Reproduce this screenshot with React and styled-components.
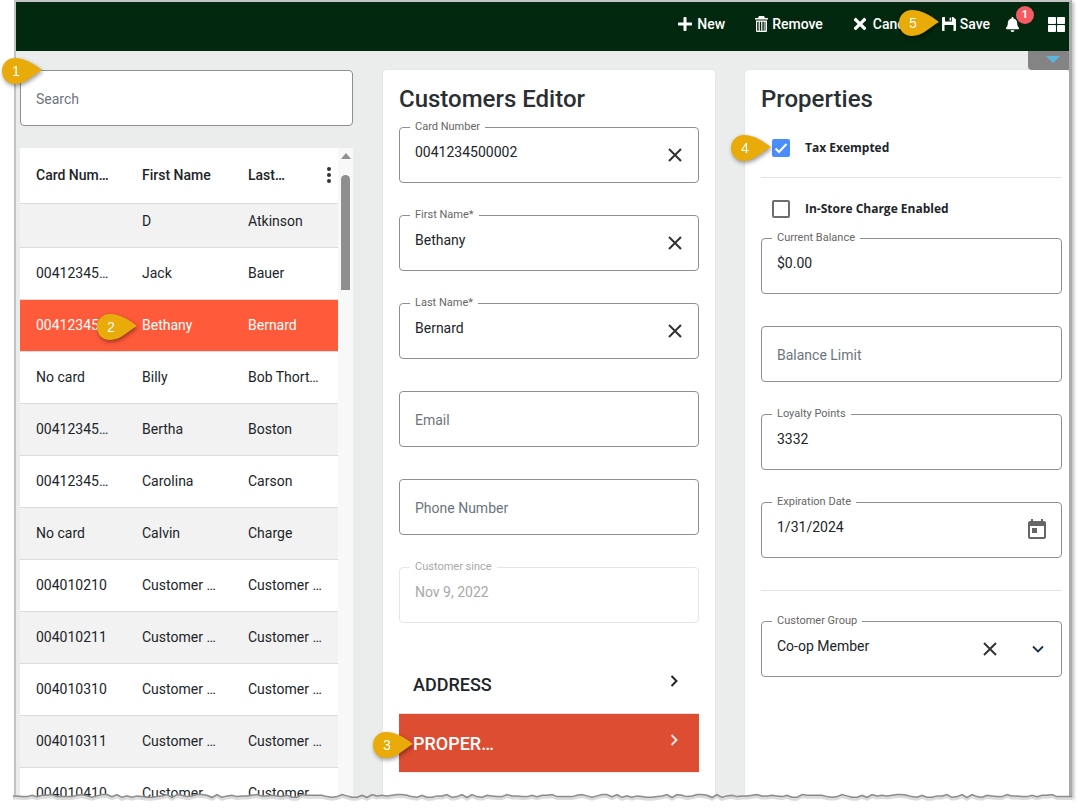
import styled, { createGlobalStyle } from "styled-components";
import { FaPlus, FaTimes, FaBell, FaThLarge } from "react-icons/fa";
import { MdToday } from "react-icons/md";

const GlobalStyle = createGlobalStyle`
  html, body {
    margin: 0;
    background: #fff;
  }
  * {
    box-sizing: border-box;
  }
`;

const Page = styled.div`
  position: relative;
  width: 1081px;
  height: 808px;
  overflow: hidden;
  padding-left: 14px;
  font-family: Roboto, "Liberation Sans", sans-serif;
  color: #212529;
`;

const Frame = styled.div`
  position: relative;
  width: 1058px;
  height: 798px;
  border: 2px solid #c4c4c4;
  border-bottom: 0;
  border-right-width: 3px;
  border-right-color: #aaa;
  background: #ebeded;
  overflow: hidden;
  box-shadow: 2px 2px 3px rgba(0, 0, 0, 0.25);
`;

const Toolbar = styled.header`
  display: flex;
  align-items: center;
  justify-content: flex-end;
  height: 49px;
  padding: 0 4px 5px 0;
  background: #02280f;
  color: #fff;
`;

const ToolButton = styled.div`
  display: flex;
  align-items: center;
  gap: 4px;
  margin-left: ${(p) => p.$ml || 30}px;
  font-size: 14px;
  font-weight: 500;
  svg {
    font-size: ${(p) => p.$icon || 16}px;
  }
`;

const BellWrap = styled.div`
  position: relative;
  display: flex;
  margin-left: 15px;
  font-size: 15px;
`;

const Badge = styled.span`
  position: absolute;
  top: -11px;
  left: 11px;
  width: 18px;
  height: 18px;
  border-radius: 50%;
  background: #f45b63;
  font-size: 11px;
  font-weight: 700;
  line-height: 18px;
  text-align: center;
`;

const GridButton = styled.div`
  display: flex;
  margin-left: 28px;
  font-size: 17px;
`;

const PanelTab = styled.div`
  position: absolute;
  top: 49px;
  right: 0;
  width: 41px;
  height: 19px;
  border-bottom-left-radius: 4px;
  background: #848484;
  &::after {
    content: "";
    position: absolute;
    top: 5px;
    left: 18px;
    border: 7px solid transparent;
    border-top: 7px solid #5ab6de;
    border-bottom: 0;
  }
`;

const Columns = styled.main`
  display: grid;
  grid-template-columns: 333px 332px 1fr;
  gap: 30px;
  padding: 19px 0 0 4px;
  height: 747px;
`;

const ListColumn = styled.section`
  display: flex;
  flex-direction: column;
  gap: 22px;
  min-height: 0;
`;

const SearchBox = styled.div`
  display: flex;
  align-items: center;
  flex: none;
  height: 56px;
  padding: 2px 15px 0;
  border: 1px solid #8f8f8f;
  border-radius: 4px;
  background: #fff;
  color: #6c757d;
  font-size: 14px;
`;

const TableWrap = styled.div`
  display: flex;
  flex: 1;
  min-height: 0;
  overflow: hidden;
`;

const Table = styled.div`
  width: 318px;
  flex: none;
  background: #fff;
`;

const HeaderRow = styled.div`
  position: relative;
  display: grid;
  grid-template-columns: 106px 106px 106px;
  align-items: center;
  height: 56px;
  padding-bottom: 2px;
  border-bottom: 1px solid #dcdcdc;
  font-weight: 500;
`;

const Row = styled.div`
  display: grid;
  grid-template-columns: 106px 106px 106px;
  align-items: center;
  height: ${(p) => (p.$short ? "44px" : "52px")};
  padding-bottom: ${(p) => (p.$short ? "10px" : "2px")};
  border-bottom: 1px solid #dcdcdc;
  background: ${(p) => (p.$selected ? "#ff5a3a" : p.$shaded ? "#f2f2f2" : "#fff")};
  color: ${(p) => (p.$selected ? "#fff" : "inherit")};
`;

const Cell = styled.div`
  padding: 0 16px;
  font-size: 14px;
  white-space: nowrap;
  overflow: hidden;
  text-overflow: ellipsis;
`;

const LastHeadCell = styled(Cell)`
  padding-right: 52px;
`;

const ColumnMenu = styled.div`
  position: absolute;
  top: 19px;
  right: 7px;
  display: flex;
  flex-direction: column;
  gap: 2px;
  span {
    width: 4px;
    height: 4px;
    border-radius: 50%;
    background: #333;
  }
`;

const ScrollBar = styled.div`
  flex: 1;
  display: flex;
  flex-direction: column;
  align-items: center;
  background: #f8f8f8;
  padding-top: 5px;
`;

const ScrollArrow = styled.div`
  border: 5px solid transparent;
  border-bottom: 6px solid #8f8f8f;
  border-top: 0;
`;

const ScrollThumb = styled.div`
  width: 9px;
  height: 115px;
  margin-top: 16px;
  border-radius: 5px 5px 0 0;
  background: #8f8f8f;
`;

const Card = styled.section`
  border-radius: 4px 4px 0 0;
  background: #fff;
  padding: 0 ${(p) => p.$right || 16}px 0 16px;
  box-shadow: 0 0 2px rgba(0, 0, 0, 0.08);
`;

const Title = styled.h2`
  margin: 0;
  height: 57px;
  font-size: 24px;
  font-weight: 500;
  line-height: 58px;
  color: #2b2f33;
`;

const FieldStack = styled.div`
  display: flex;
  flex-direction: column;
  gap: 32px;
`;

const Field = styled.div`
  position: relative;
  display: flex;
  align-items: center;
  height: 56px;
  padding: 0 15px;
  border: 1px solid ${(p) => (p.$disabled ? "#e6e6e6" : "#8f8f8f")};
  border-radius: 4px;
  font-size: 14px;
  color: ${(p) => (p.$disabled ? "#a8a8a8" : "#212529")};
`;

const FieldLabel = styled.label`
  position: absolute;
  top: -8px;
  left: 10px;
  padding: 0 5px;
  background: #fff;
  font-size: 11px;
  line-height: 13px;
  color: ${(p) => (p.$disabled ? "#a8a8a8" : "#666")};
`;

const Value = styled.span`
  flex: 1;
  margin-bottom: 6px;
`;

const Placeholder = styled.span`
  flex: 1;
  padding-top: 2px;
  color: #6c757d;
`;

const IconSlot = styled.span`
  display: flex;
  margin-right: ${(p) => p.$mr || 0}px;
  color: ${(p) => p.$color || "#333"};
`;

const ChevronSlot = styled.span`
  display: flex;
  margin: 0 1px 0 33px;
`;

const Divider = styled.hr`
  margin: ${(p) => p.$top}px 0 0;
  border: 0;
  border-top: 1px solid #e2e2e2;
`;

const CheckRow = styled.div`
  display: flex;
  align-items: center;
  gap: 15px;
  margin-top: ${(p) => p.$top}px;
  padding-left: 11px;
  font-family: "Open Sans", "Liberation Sans", sans-serif;
  font-size: 12px;
  font-weight: 700;
  line-height: 18px;
`;

const CheckBox = styled.span`
  display: flex;
  align-items: center;
  justify-content: center;
  width: 18px;
  height: 18px;
  border-radius: 2px;
  border: 2px solid ${(p) => (p.$checked ? "#4a8dff" : "#6e6e6e")};
  background: ${(p) => (p.$checked ? "#4a8dff" : "#fff")};
`;

const AccordionList = styled.div`
  margin-top: 32px;
`;

const AccordionRow = styled.div`
  display: flex;
  align-items: center;
  justify-content: space-between;
  height: 59px;
  padding: 0 19px 0 14px;
  border-bottom: 1px solid ${(p) => (p.$active ? "#eee" : "#e2e2e2")};
  background: ${(p) => (p.$active ? "#dd4d31" : "#fff")};
  color: ${(p) => (p.$active ? "#fff" : "#212529")};
  font-size: 18px;
  font-weight: 500;
  svg {
    margin-bottom: 6px;
    color: ${(p) => (p.$active ? "#e4e4e4" : "#212529")};
  }
`;

const RightStack = styled(FieldStack)`
  margin-top: 20px;
`;

const GroupField = styled.div`
  margin-top: 30px;
`;

const Callout = styled.div`
  position: absolute;
  left: ${(p) => p.$x}px;
  top: ${(p) => p.$y}px;
  width: 42px;
  height: 28px;
  filter: drop-shadow(1px 2px 2px rgba(0, 0, 0, 0.4));
  svg {
    display: block;
  }
  span {
    position: absolute;
    top: 0;
    left: 1px;
    width: 28px;
    font-family: "Liberation Sans", sans-serif;
    font-size: 14px;
    line-height: 28px;
    text-align: center;
    color: #fff;
  }
`;

const TornEdge = styled.svg`
  position: absolute;
  left: 0;
  bottom: 0;
  display: block;
`;

const CloseGlyph = () => (
  <svg width="16" height="16" viewBox="0 0 16 16" fill="none" stroke="currentColor" strokeWidth="2">
    <path d="M2 2l12 12M14 2L2 14" />
  </svg>
);

const Chevron = () => (
  <svg width="12" height="12" viewBox="0 0 12 12" fill="none" stroke="currentColor" strokeWidth="2">
    <path d="M3.5 1l5 5-5 5" />
  </svg>
);

const ChevronDown = () => (
  <svg width="14" height="14" viewBox="0 0 14 14" fill="none" stroke="#17324a" strokeWidth="1.8">
    <path d="M2 4.5l5 5 5-5" />
  </svg>
);

// old font-awesome style trash can, lid on top and stripes in the body
const TrashGlyph = () => (
  <svg width="13" height="16" viewBox="0 0 13 16" fill="currentColor">
    <path d="M4 0h5l1 2h3v1.6H0V2h3z" />
    <path d="M1 4.6h11V15a1 1 0 0 1-1 1H2a1 1 0 0 1-1-1zM2.2 5.8V14.8h1.4V5.8zm2.6 0V14.8h1.4V5.8zm2.6 0V14.8h1.4V5.8zm2.2 0V14.8h.9V5.8z" fillRule="evenodd" />
  </svg>
);

// floppy with notched top edge and a solid label block
const SaveGlyph = () => (
  <svg width="14" height="14" viewBox="0 0 14 14" fill="currentColor">
    <path
      fillRule="evenodd"
      d="M1 0h2v4.5h7V0h1.2L14 2.6V13a1 1 0 0 1-1 1H1a1 1 0 0 1-1-1V1a1 1 0 0 1 1-1zM2.5 8v6h9V8z"
    />
    <path d="M7.6 0.6h1.6v3H7.6z" />
  </svg>
);

const customers = [
  { card: "", first: "D", last: "Atkinson", shaded: true, short: true },
  { card: "0041234500001", first: "Jack", last: "Bauer" },
  { card: "0041234500002", first: "Bethany", last: "Bernard", selected: true },
  { card: "No card", first: "Billy", last: "Bob Thorton" },
  { card: "0041234500003", first: "Bertha", last: "Boston", shaded: true },
  { card: "0041234500004", first: "Carolina", last: "Carson" },
  { card: "No card", first: "Calvin", last: "Charge", shaded: true },
  { card: "004010210", first: "Customer 210", last: "Customer 210" },
  { card: "004010211", first: "Customer 211", last: "Customer 211", shaded: true },
  { card: "004010310", first: "Customer 310", last: "Customer 310" },
  { card: "004010311", first: "Customer 311", last: "Customer 311", shaded: true },
  { card: "004010410", first: "Customer 410", last: "Customer 410" },
];

const callouts = [
  { n: 1, x: 1, y: 57 },
  { n: 2, x: 96, y: 313 },
  { n: 3, x: 372, y: 731 },
  { n: 4, x: 730, y: 134 },
  { n: 5, x: 898, y: 9 },
];

// jagged screenshot edge along the bottom, same every render
function tornPath() {
  let d = "M13 8";
  let seed = 7;
  for (let x = 17; x <= 1074; x += 5) {
    seed = (seed * 73 + 41) % 101;
    d += ` L${x} ${6.5 + (seed % 5) * 0.7}`;
  }
  return d;
}

function TextField({ label, value, placeholder, disabled, clear, children }) {
  return (
    <Field $disabled={disabled}>
      {label && <FieldLabel $disabled={disabled}>{label}</FieldLabel>}
      {placeholder ? <Placeholder>{placeholder}</Placeholder> : <Value>{value}</Value>}
      {clear && (
        <IconSlot>
          <CloseGlyph />
        </IconSlot>
      )}
      {children}
    </Field>
  );
}

export default function App() {
  const edge = tornPath();
  return (
    <Page>
      <GlobalStyle />
      <Frame>
        <Toolbar>
          <ToolButton>
            <FaPlus />
            New
          </ToolButton>
          <ToolButton>
            <TrashGlyph />
            Remove
          </ToolButton>
          <ToolButton $icon={18} $ml={28}>
            <FaTimes />
            Cancel
          </ToolButton>
          <ToolButton $ml={26}>
            <SaveGlyph />
            Save
          </ToolButton>
          <BellWrap>
            <FaBell />
            <Badge>1</Badge>
          </BellWrap>
          <GridButton>
            <FaThLarge />
          </GridButton>
        </Toolbar>
        <PanelTab />
        <Columns>
          <ListColumn>
            <SearchBox>Search</SearchBox>
            <TableWrap>
              <Table>
                <HeaderRow>
                  <Cell>Card Number</Cell>
                  <Cell>First Name</Cell>
                  <LastHeadCell>Last Name</LastHeadCell>
                  <ColumnMenu>
                    <span />
                    <span />
                    <span />
                  </ColumnMenu>
                </HeaderRow>
                {customers.map((c) => (
                  <Row key={c.first + c.last} $short={c.short} $shaded={c.shaded} $selected={c.selected}>
                    <Cell>{c.card}</Cell>
                    <Cell>{c.first}</Cell>
                    <Cell>{c.last}</Cell>
                  </Row>
                ))}
              </Table>
              <ScrollBar>
                <ScrollArrow />
                <ScrollThumb />
              </ScrollBar>
            </TableWrap>
          </ListColumn>

          <Card>
            <Title>Customers Editor</Title>
            <FieldStack>
              <TextField label="Card Number" value="0041234500002" clear />
              <TextField label="First Name*" value="Bethany" clear />
              <TextField label="Last Name*" value="Bernard" clear />
              <TextField placeholder="Email" />
              <TextField placeholder="Phone Number" />
              <TextField label="Customer since" value="Nov 9, 2022" disabled />
            </FieldStack>
            <AccordionList>
              <AccordionRow>
                ADDRESS
                <Chevron />
              </AccordionRow>
              <AccordionRow $active>
                PROPER…
                <Chevron />
              </AccordionRow>
            </AccordionList>
          </Card>

          <Card $right={7}>
            <Title>Properties</Title>
            <CheckRow $top={12}>
              <CheckBox $checked>
                <svg width="14" height="14" viewBox="0 0 14 14" fill="none" stroke="#fff" strokeWidth="2">
                  <path d="M1.5 7.5l3.5 3.5 7.5-8" />
                </svg>
              </CheckBox>
              Tax Exempted
            </CheckRow>
            <Divider $top={20} />
            <CheckRow $top={22}>
              <CheckBox />
              In-Store Charge Enabled
            </CheckRow>
            <RightStack>
              <TextField label="Current Balance" value="$0.00" />
              <TextField placeholder="Balance Limit" />
              <TextField label="Loyalty Points" value="3332" />
              <TextField label="Expiration Date" value="1/31/2024">
                <IconSlot $mr={-3} $color="#666">
                  <MdToday size={24} />
                </IconSlot>
              </TextField>
            </RightStack>
            <Divider $top={32} />
            <GroupField>
              <TextField label="Customer Group" value="Co-op Member" clear>
                <ChevronSlot>
                  <ChevronDown />
                </ChevronSlot>
              </TextField>
            </GroupField>
          </Card>
        </Columns>
      </Frame>

      {callouts.map((c) => (
        <Callout key={c.n} $x={c.x} $y={c.y}>
          <svg width="42" height="28" viewBox="0 0 42 28">
            <path d="M14 1C24 1 33 7 41 13C33 17 25 27 14 27C6 27 1 21 1 14C1 7 6 1 14 1Z" fill="#e8ab0a" />
          </svg>
          <span>{c.n}</span>
        </Callout>
      ))}

      <TornEdge width="1081" height="20" viewBox="0 0 1081 20">
        <path d={`${edge} L1074 20 L13 20 Z`} fill="#fff" />
        <path d={edge} fill="none" stroke="#8f8f8f" strokeWidth="1.5" />
        <path d={edge} fill="none" stroke="#000" strokeOpacity="0.14" strokeWidth="3" transform="translate(0 2)" />
      </TornEdge>
    </Page>
  );
}
